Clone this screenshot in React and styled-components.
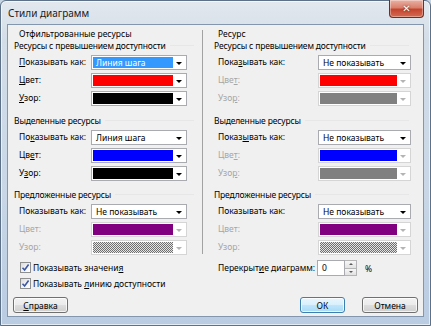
import React from "react";
import styled, { createGlobalStyle } from "styled-components";

const Global = createGlobalStyle`
  html, body {
    margin: 0;
    padding: 0;
    background: #c6d5e6;
  }
  body {
    width: 431px;
    height: 326px;
    overflow: hidden;
    font-family: "Noto Sans", "Open Sans", sans-serif;
    font-size: 8.5px;
    color: #000;
  }
  * { box-sizing: border-box; }
`;

const Window = styled.div`
  width: 431px;
  height: 326px;
  display: flex;
  flex-direction: column;
  padding: 0 6px 8px 6px;
  border: 1px solid #5d7189;
  border-radius: 6px 6px 0 0;
  background: linear-gradient(180deg, #e3e8ee 0%, #d3dde8 12%, #c8d6e6 60%, #b9cce2 100%);
  box-shadow: inset 0 0 0 1px rgba(255, 255, 255, 0.6);
`;

const TitleBar = styled.div`
  height: 23px;
  display: flex;
  align-items: flex-start;
`;

const Title = styled.div`
  padding: 5px 0 0 1px;
  font-size: 10px;
  line-height: 14px;
  color: #1b1b1b;
`;

const CloseButton = styled.div`
  margin-left: auto;
  margin-top: -1px;
  width: 35px;
  height: 18px;
  display: flex;
  align-items: center;
  justify-content: center;
  border: 1px solid #6e2e24;
  border-top: none;
  border-radius: 0 0 4px 4px;
  background: linear-gradient(180deg, #eab2a4 0%, #d9806c 45%, #c4452e 55%, #d46a52 100%);
  box-shadow: inset 0 0 0 1px rgba(255, 255, 255, 0.35);
  color: #fff;
  font-family: "DejaVu Sans", sans-serif;
  font-weight: bold;
  font-size: 10px;
  text-shadow: 0 0 2px #5a1a10;
`;

const Client = styled.div`
  flex: 1;
  display: flex;
  flex-direction: column;
  border: 1px solid #8396ad;
  background: #f0f0f0;
`;

const Panels = styled.div`
  display: flex;
`;

const Column = styled.div`
  width: ${(p) => p.$width}px;
  padding: 3px 0 0 ${(p) => p.$pad}px;
`;

const Divider = styled.div`
  width: 1px;
  margin: 5px 0 2px;
  background: #a2a2a2;
`;

const GroupTitle = styled.div`
  height: 11px;
  line-height: 12px;
  padding-left: ${(p) => p.$indent}px;
`;

const Header = styled.div`
  display: flex;
  align-items: center;
  height: 14px;
  margin-top: ${(p) => p.$top}px;
  letter-spacing: -0.15px;
  white-space: nowrap;
  &::after {
    content: "";
    flex: 1;
    height: 1px;
    margin: 1px 8px 0 4px;
    background: #e7e7e7;
  }
`;

const Rows = styled.div`
  margin-top: 1px;
  padding-left: ${(p) => p.$indent}px;
`;

const Row = styled.div`
  display: flex;
  height: 18px;
`;

const Label = styled.div`
  width: ${(p) => p.$width}px;
  line-height: 18px;
  white-space: nowrap;
  color: ${(p) => (p.$disabled ? "#a6a6a6" : "#000")};
`;

const U = styled.span`
  text-decoration: underline;
  text-underline-offset: 1px;
`;

const Combo = styled.div`
  width: ${(p) => p.$width}px;
  height: 15px;
  margin-top: 2px;
  padding: 1px;
  display: flex;
  border: 1px solid ${(p) => (p.$disabled ? "#d5d5d5" : "#a9abb1")};
  background: #fff;
`;

const Swatch = styled.div`
  width: ${(p) => p.$width}px;
  height: 11px;
  background: ${(p) =>
    p.$pattern
      ? "repeating-conic-gradient(#6f6f6f 0 25%, #e4e4e4 0 50%) 0 0 / 2px 2px"
      : p.$color};
`;

const Value = styled.div`
  width: ${(p) => p.$width}px;
  height: 11px;
  padding-left: 3px;
  line-height: 11px;
  white-space: nowrap;
  color: ${(p) => (p.$selected ? "#fff" : "#000")};
  background: ${(p) => (p.$selected ? "#3399ff" : "transparent")};
`;

const ArrowBox = styled.div`
  flex: 1;
  display: flex;
  align-items: center;
  justify-content: center;
`;

const Arrow = styled.div`
  width: 0;
  height: 0;
  border-left: 3px solid transparent;
  border-right: 3px solid transparent;
  border-top: 3px solid ${(p) => (p.$disabled ? "#b4b4b4" : "#000")};
  margin-top: 1px;
`;

const Extras = styled.div`
  display: flex;
  margin-top: 3px;
`;

const Checks = styled.div`
  width: 195px;
  padding-left: 12px;
`;

const CheckRow = styled.div`
  display: flex;
  align-items: center;
  height: 16px;
  gap: 2px;
  white-space: nowrap;
`;

const CheckBox = styled.div`
  width: 11px;
  height: 11px;
  display: flex;
  align-items: center;
  justify-content: center;
  border: 1px solid #8e8f8f;
  background: linear-gradient(135deg, #dcdcdc 0%, #f6f6f6 60%, #ffffff 100%);
`;

const Overlap = styled.div`
  display: flex;
  align-items: center;
  height: 18px;
  padding-left: 15px;
`;

const SpinInput = styled.div`
  width: 28px;
  height: 16px;
  padding-left: 4px;
  line-height: 14px;
  border: 1px solid #a9abb1;
  background: #fff;
`;

const SpinButtons = styled.div`
  width: 12px;
  height: 16px;
  display: flex;
  flex-direction: column;
`;

const SpinButton = styled.div`
  flex: 1;
  display: flex;
  align-items: center;
  justify-content: center;
  border: 1px solid #b5b5b5;
  border-left: none;
  border-top: ${(p) => (p.$down ? "none" : "1px solid #b5b5b5")};
  background: linear-gradient(180deg, #f7f7f7, #e2e2e2);
  &::before {
    content: "";
    border-left: 2px solid transparent;
    border-right: 2px solid transparent;
    ${(p) => (p.$down ? "border-top" : "border-bottom")}: 2px solid #5a5a5a;
  }
`;

const Percent = styled.div`
  margin-left: 8px;
`;

const Footer = styled.div`
  display: flex;
  margin-top: 6px;
  padding: 0 5px;
`;

const Button = styled.div`
  width: ${(p) => p.$width}px;
  height: 16px;
  margin-left: ${(p) => p.$gap || 0}px;
  display: flex;
  align-items: center;
  justify-content: center;
  border: 1px solid ${(p) => (p.$default ? "#3c7fb1" : "#707070")};
  border-radius: 3px;
  background: ${(p) =>
    p.$default
      ? "linear-gradient(180deg, #eaf6fd 0%, #d9f0fc 48%, #bee6fd 52%, #a7d9f5 100%)"
      : "linear-gradient(180deg, #f2f2f2 0%, #ebebeb 48%, #dddddd 52%, #cfcfcf 100%)"};
  box-shadow: inset 0 0 0 1px rgba(255, 255, 255, 0.75);
  &:first-child {
    margin-right: auto;
  }
`;

const Check = () => (
  <svg width="9" height="9" viewBox="0 0 9 9">
    <path d="M1.5 4.8 L3.6 7 L7.6 1.6" fill="none" stroke="#3a58a5" strokeWidth="1.6" />
  </svg>
);

const left = [
  {
    title: "Ресурсы с превышением доступности",
    top: -1,
    rows: [
      { label: [<U key="u">П</U>, "оказывать как:"], value: "Линия шага", selected: true },
      { label: [<U key="u">Ц</U>, "вет:"], color: "#ff0000" },
      { label: [<U key="u">У</U>, "зор:"], color: "#000000" },
    ],
  },
  {
    title: "Выделенные ресурсы",
    top: 6,
    rows: [
      { label: ["По", <U key="u">к</U>, "азывать как:"], value: "Линия шага" },
      { label: ["Цв", <U key="u">е</U>, "т:"], color: "#0000ff" },
      { label: ["У", <U key="u">з</U>, "ор:"], color: "#000000" },
    ],
  },
  {
    title: "Предложенные ресурсы",
    top: 5,
    rows: [
      { label: ["Показывать как:"], value: "Не показывать" },
      { label: ["Цвет:"], color: "#800080", disabled: true },
      { label: ["Узор:"], pattern: true, disabled: true },
    ],
  },
];

const right = [
  {
    title: "Ресурсы с превышением доступности",
    top: -1,
    rows: [
      { label: ["Пока", <U key="u">з</U>, "ывать как:"], value: "Не показывать" },
      { label: ["Цве", <U key="u">т</U>, ":"], color: "#ff0000", disabled: true },
      { label: ["Узо", <U key="u">р</U>, ":"], color: "#808080", disabled: true },
    ],
  },
  {
    title: "Выделенные ресурсы",
    top: 6,
    rows: [
      { label: ["Показ", <U key="u">ы</U>, "вать как:"], value: "Не показывать" },
      { label: ["Цве", <U key="u">т</U>, ":"], color: "#0000ff", disabled: true },
      { label: ["Узо", <U key="u">р</U>, ":"], color: "#808080", disabled: true },
    ],
  },
  {
    title: "Предложенные ресурсы",
    top: 5,
    rows: [
      { label: ["Показывать как:"], value: "Не показывать" },
      { label: ["Цвет:"], color: "#800080", disabled: true },
      { label: ["Узор:"], pattern: true, disabled: true },
    ],
  },
];

const Section = ({ section, labelWidth, comboWidth, indent }) => (
  <>
    <Header $top={section.top}>{section.title}</Header>
    <Rows $indent={indent}>
      {section.rows.map((r, i) => (
        <Row key={i}>
          <Label $width={labelWidth} $disabled={r.disabled}>
            {r.label}
          </Label>
          <Combo $width={comboWidth} $disabled={r.disabled}>
            {r.value ? (
              <Value $width={comboWidth - 16} $selected={r.selected}>
                {r.value}
              </Value>
            ) : (
              <Swatch $width={comboWidth - 16} $color={r.color} $pattern={r.pattern} />
            )}
            <ArrowBox>
              <Arrow $disabled={r.disabled} />
            </ArrowBox>
          </Combo>
        </Row>
      ))}
    </Rows>
  </>
);

export default function App() {
  return (
    <>
      <Global />
      <Window>
        <TitleBar>
          <Title>Стили диаграмм</Title>
          <CloseButton>✕</CloseButton>
        </TitleBar>
        <Client>
          <Panels>
            <Column $width={194} $pad={6}>
              <GroupTitle $indent={5}>Отфильтрованные ресурсы</GroupTitle>
              {left.map((s, i) => (
                <Section key={i} section={s} labelWidth={72} comboWidth={96} indent={5} />
              ))}
            </Column>
            <Divider />
            <Column $width={214} $pad={11}>
              <GroupTitle $indent={4}>Ресурс</GroupTitle>
              {right.map((s, i) => (
                <Section key={i} section={s} labelWidth={100} comboWidth={93} indent={4} />
              ))}
            </Column>
          </Panels>
          <Extras>
            <Checks>
              <CheckRow>
                <CheckBox>
                  <Check />
                </CheckBox>
                <span>
                  Показывать значени<U>я</U>
                </span>
              </CheckRow>
              <CheckRow>
                <CheckBox>
                  <Check />
                </CheckBox>
                <span>
                  Показывать <U>л</U>инию доступности
                </span>
              </CheckRow>
            </Checks>
            <Overlap>
              <Label $width={99}>
                Перекрыт<U>и</U>е диаграмм:
              </Label>
              <SpinInput>0</SpinInput>
              <SpinButtons>
                <SpinButton />
                <SpinButton $down />
              </SpinButtons>
              <Percent>%</Percent>
            </Overlap>
          </Extras>
          <Footer>
            <Button $width={55}>
              <span>
                <U>С</U>правка
              </span>
            </Button>
            <Button $width={45} $default>
              ОК
            </Button>
            <Button $width={56} $gap={17}>
              Отмена
            </Button>
          </Footer>
        </Client>
      </Window>
    </>
  );
}
